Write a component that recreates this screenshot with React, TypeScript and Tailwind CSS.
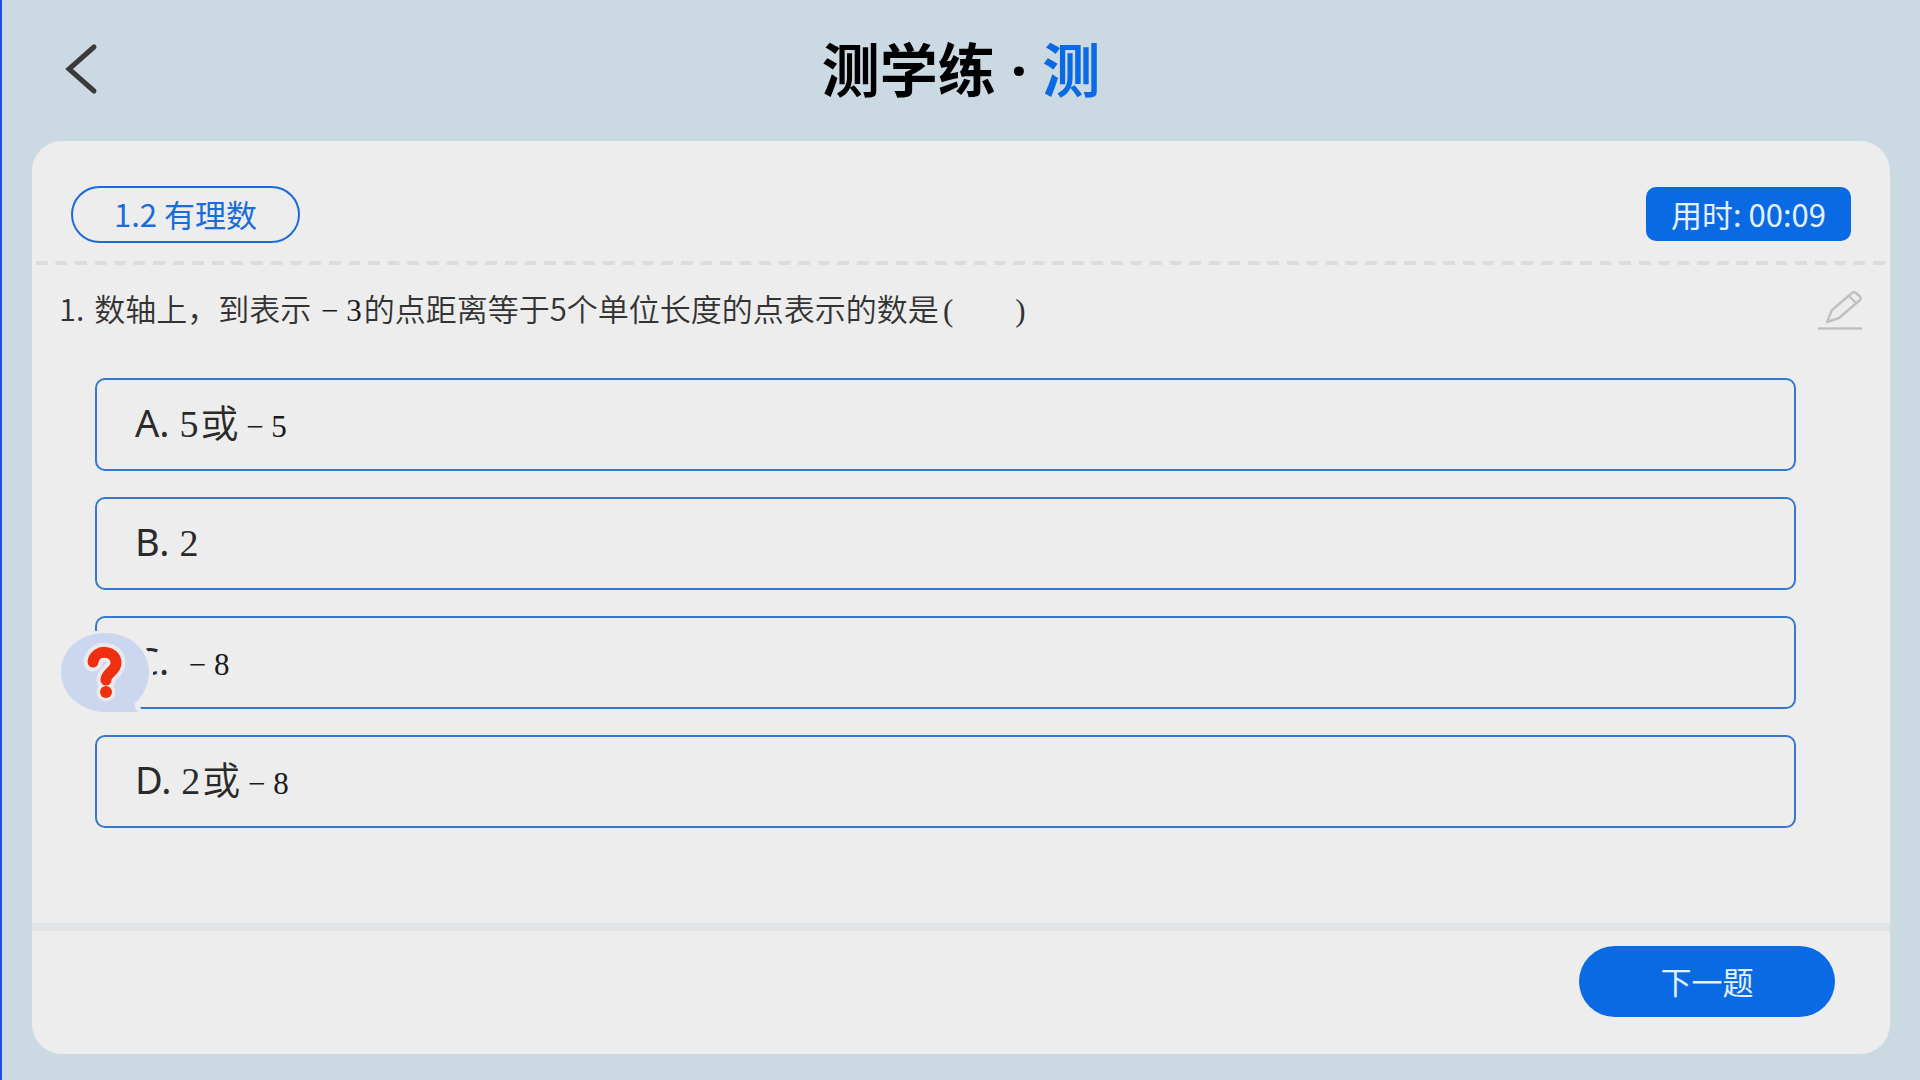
import { useState } from "react";

const options = [
  { key: "A", value: "5", text: "或", math: "− 5" },
  { key: "B", value: "2", text: "", math: "" },
  { key: "C", value: "", text: "", math: "− 8" },
  { key: "D", value: "2", text: "或", math: "− 8" },
];

function BackIcon() {
  return (
    <svg width="36" height="54" viewBox="0 0 36 54" fill="none">
      <path
        d="M32 5 L7 27 L32 49"
        stroke="#3a3a3a"
        strokeWidth="5"
        strokeLinecap="round"
      />
    </svg>
  );
}

function PencilIcon() {
  return (
    <svg width="44" height="40" viewBox="0 0 44 40" fill="none" stroke="#c0c0c0">
      <path
        d="M9 31 L14 19 L34 2 Q36 0.5 38 2 L42 5.500 Q43.500 7.500 42 9 L21 27 Z M31 5 L38 12"
        strokeWidth="2.4"
        strokeLinejoin="round"
      />
      <path d="M0 37.500 H44" strokeWidth="2.4" />
    </svg>
  );
}

function HelpIcon() {
  return (
    <svg width="94" height="84" viewBox="-2 -2 94 84" fill="none">
      <path
        d="M44 0 C69 0 88 17 88 39 C88 52 82 63 74 70 Q73 74 77 79 H40 C17 76 0 60 0 39 C0 17 19 0 44 0 Z"
        fill="#cad7ee"
        stroke="#ededed"
        strokeWidth="9"
        strokeLinejoin="round"
        paintOrder="stroke"
      />
      <g strokeLinecap="round" strokeLinejoin="round">
        <path
          d="M32 29 C34 15 55 17 55 30 C55 38 45 40 45 47 M45 59 V59"
          stroke="#ece9ee"
          strokeWidth="19"
        />
        <path
          d="M32 29 C34 15 55 17 55 30 C55 38 45 40 45 47"
          stroke="#ee3010"
          strokeWidth="11"
        />
        <path d="M45 59 V59" stroke="#ee3010" strokeWidth="12" />
      </g>
    </svg>
  );
}

export default function App() {
  const [selected, setSelected] = useState("");

  return (
    <div className="flex min-h-screen flex-col border-l-2 border-[#1a50e8] bg-[#cbd9e3] pr-[30px] pb-[26px] pl-[30px] font-['Noto_Sans_CJK_SC',sans-serif] text-[#333]">
      <header className="grid h-[141px] grid-cols-[1fr_auto_1fr] items-center">
        <button type="button" aria-label="返回" className="justify-self-start pb-1 pl-[30px]">
          <BackIcon />
        </button>
        <h1 className="pb-1 text-[58px] leading-[80px] font-bold text-black">
          测学练<span className="font-['Noto_Sans',sans-serif]"> · </span>
          <span className="text-[#0a6ae4]">测</span>
        </h1>
      </header>

      <main className="flex flex-1 flex-col rounded-[30px] bg-[#ededed]">
        <div className="flex h-[120px] items-center justify-between pt-[26px] pr-[39px] pl-[39px]">
          <span className="flex h-[57px] w-[229px] items-center justify-center rounded-full border-2 border-[#1a6cd8] text-[31px] text-[#1a6cd8]">
            1.2 有理数
          </span>
          <span className="flex h-[54px] w-[205px] items-center justify-center rounded-[10px] bg-[#0a6ae4] text-[31px] text-[#e4f0ff]">
            用时: 00:09
          </span>
        </div>
        <div className="h-1 bg-[linear-gradient(90deg,transparent_20%,#dcdcdc_20%,#dcdcdc_80%,transparent_80%)] bg-[length:calc(100%/95)_4px]" />

        <section className="relative flex-1 pr-[94px] pl-[63px]">
          <div className="flex h-[113px] items-start pt-5">
            <h2 className="-ml-9 flex gap-2.5 text-[31px] leading-[46px] font-[350] whitespace-pre">
              <span>1.</span>
              <span>
                数轴上，到表示
                <span className="mr-0.5 ml-0.5 font-['Liberation_Serif',serif] text-[#1a1a1a]"> − 3</span>
                的点距离等于5个单位长度的点表示的数是
                <span className="ml-1 font-['Liberation_Serif',serif]">(        )</span>
              </span>
            </h2>
          </div>
          <button type="button" aria-label="草稿" className="absolute top-[26px] right-7">
            <PencilIcon />
          </button>

          <div className="flex flex-col gap-[26px] pb-[94px]">
            {options.map((o) => (
              <button
                key={o.key}
                type="button"
                aria-pressed={selected === o.key}
                onClick={() => setSelected(o.key)}
                className="flex h-[93px] items-center rounded-[10px] border-2 border-[#3478cf] px-[38px] pb-1 text-left text-[38px] font-[350] text-[#2a2a2a]"
              >
                <span className="whitespace-pre">
                  <span className="font-['Noto_Sans',sans-serif] font-normal">{o.key}. </span>
                  <span className="mr-0.5 font-['Liberation_Serif',serif]">{o.value}</span>
                  {o.text}
                  <span className="font-['Liberation_Serif',serif] text-[31px] text-[#1a1a1a]"> {o.math}</span>
                </span>
              </button>
            ))}
          </div>

          <button type="button" aria-label="帮助" className="absolute top-[366px] left-[27px]">
            <HelpIcon />
          </button>
        </section>

        <footer className="flex justify-end border-t-8 border-[#e1e4e7] pt-[15px] pr-[55px] pb-[37px]">
          <button
            type="button"
            className="h-[71px] w-[256px] rounded-full bg-[#0a6ae4] text-[31px] text-[#e4f0ff]"
          >
            下一题
          </button>
        </footer>
      </main>
    </div>
  );
}
